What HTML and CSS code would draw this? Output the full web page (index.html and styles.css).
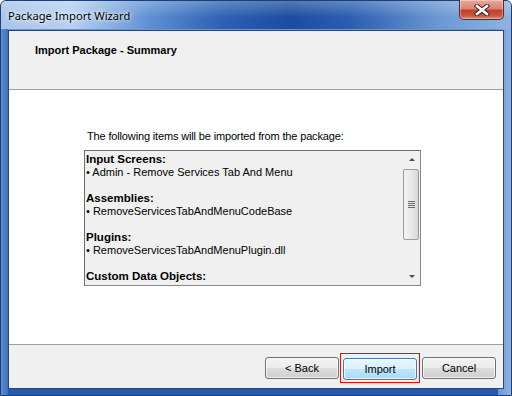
FILE: index.html
```html
<!DOCTYPE html>
<html lang="en">
<head>
    <meta charset="UTF-8">
    <title>Package Import Wizard</title>
    <link rel="stylesheet" href="styles.css">
</head>
<body>
    <div class="window">
        <div class="titlebar">
            <span class="title">Package Import Wizard</span>
            <div class="close-btn">
                <svg width="16" height="12" viewBox="0 0 16 12">
                    <path d="M3 2 L13 10 M13 2 L3 10" stroke="#3a2020" stroke-width="4.5" stroke-linecap="square"/>
                    <path d="M3 2 L13 10 M13 2 L3 10" stroke="#fff" stroke-width="2.6" stroke-linecap="square"/>
                </svg>
            </div>
        </div>

        <div class="client">
            <div class="wizard-header">
                <h1>Import Package - Summary</h1>
            </div>

            <div class="wizard-body">
                <p class="intro">The following items will be imported from the package:</p>
                <div class="listbox">
                    <div class="list-text">
                        <b>Input Screens:</b>
                        <span>&bull; Admin - Remove Services Tab And Menu</span>
                        <span>&nbsp;</span>
                        <b>Assemblies:</b>
                        <span>&bull; RemoveServicesTabAndMenuCodeBase</span>
                        <span>&nbsp;</span>
                        <b>Plugins:</b>
                        <span>&bull; RemoveServicesTabAndMenuPlugin.dll</span>
                        <span>&nbsp;</span>
                        <b>Custom Data Objects:</b>
                    </div>
                    <div class="scrollbar">
                        <div class="arrow up"></div>
                        <div class="track">
                            <div class="thumb"><i></i><i></i><i></i><i></i></div>
                        </div>
                        <div class="arrow down"></div>
                    </div>
                </div>
            </div>

            <div class="wizard-footer">
                <button class="btn">&lt; Back</button>
                <div class="focus-box">
                    <button class="btn btn-default">Import</button>
                </div>
                <button class="btn">Cancel</button>
            </div>
        </div>
    </div>
</body>
</html>
```

FILE: styles.css
```css
* {
    margin: 0;
    padding: 0;
    box-sizing: border-box;
}

body {
    width: 512px;
    height: 396px;
    overflow: hidden;
    background: #fff;
    font-family: "Liberation Sans", Arial, sans-serif;
    font-size: 11px;
    color: #000;
}

/* ventana */
.window {
    width: 512px;
    height: 396px;
    display: flex;
    flex-direction: column;
    padding: 0 7px 6px 7px;
    border: 1px solid #1c3f78;
    border-radius: 6px 6px 0 0;
    background:
        linear-gradient(to right, #5c8dd0 0, #3e70bd 7px, transparent 7px, transparent 497px, #6f98d2 497px, #8fb2df 510px),
        linear-gradient(to bottom, #6f9ad6 0, #2f63b4 60%, #2559ab 100%);
    position: relative;
}

.titlebar {
    height: 28px;
    margin: 0 -7px;
    padding: 0 7px;
    display: flex;
    align-items: center;
    position: relative;
    border-radius: 5px 5px 0 0;
    background:
        linear-gradient(to bottom, rgba(255,255,255,0.25), rgba(255,255,255,0) 60%),
        linear-gradient(to right, #a8c5ea 0, #b7d0ef 70px, #5c8fd2 150px, #2e62b4 220px, #1a4c9f 290px, #2c5fb1 350px, #6d98d4 440px, #90b3e0 510px);
}

.title {
    font-family: "Noto Sans", "DejaVu Sans", sans-serif;
    font-size: 11.2px;
    color: #000;
    margin-top: 1px;
    text-shadow: 0 0 6px rgba(255,255,255,0.9), 0 0 3px rgba(255,255,255,0.9);
}

.close-btn {
    position: absolute;
    top: -1px;
    right: 7px;
    width: 45px;
    height: 20px;
    border: 1px solid #5b2a22;
    border-top: none;
    border-radius: 0 0 5px 5px;
    background: linear-gradient(to bottom, #e9a899 0, #d98474 45%, #c0412b 55%, #c9533e 80%, #dd8a72 100%);
    box-shadow: inset 0 0 0 1px rgba(255,255,255,0.35);
    display: flex;
    align-items: center;
    justify-content: center;
}

/* area cliente */
.client {
    flex: 1;
    display: flex;
    flex-direction: column;
    background: #f0f0f0;
    border: 1px solid #28477c;
    margin-top: 1px;
}

.wizard-header {
    height: 59px;
    border-bottom: 1px solid #a0a0a0;
    padding: 13px 0 0 26px;
}

.wizard-header h1 {
    font-size: 11px;
    font-weight: bold;
}

.wizard-body {
    flex: 1;
    background: #fff;
    border-top: 1px solid #fff;
    border-bottom: 1px solid #a0a0a0;
    padding: 39px 0 0 75px;
}

.intro {
    line-height: 13px;
    margin-left: 3px;
    margin-bottom: 7px;
    letter-spacing: -0.15px;
}

.listbox {
    width: 337px;
    height: 136px;
    display: flex;
    background: #f0f0f0;
    border: 1px solid #828790;
    border-top-color: #6d6d6d;
    border-left-color: #6d6d6d;
    overflow: hidden;
}

.list-text {
    flex: 1;
    padding: 2px 0 0 1px;
    display: flex;
    flex-direction: column;
    line-height: 13px;
}

.list-text b {
    font-weight: bold;
    font-size: 11.5px;
}

.scrollbar {
    width: 17px;
    display: flex;
    flex-direction: column;
    background: #f0f0f0;
}

.arrow {
    height: 17px;
    display: flex;
    align-items: center;
    justify-content: center;
}

.arrow::before {
    content: "";
    border-left: 3px solid transparent;
    border-right: 3px solid transparent;
}

.arrow.up::before {
    border-bottom: 3px solid #4d4d4d;
}

.arrow.down::before {
    border-top: 3px solid #4d4d4d;
}

.track {
    flex: 1;
    padding: 1px 1px 0 0;
}

.thumb {
    height: 71px;
    border: 1px solid #9b9b9b;
    border-radius: 2px;
    background: linear-gradient(to right, #f3f3f3, #e6e6e6 60%, #d6d6d6);
    display: flex;
    flex-direction: column;
    align-items: center;
    justify-content: center;
    gap: 1px;
}

.thumb i {
    display: block;
    width: 7px;
    height: 1px;
    background: #6a6a6a;
}

/* pie */
.wizard-footer {
    height: 43px;
    display: flex;
    align-items: center;
    justify-content: flex-end;
    padding: 2px 7px 0 0;
}

.btn {
    width: 74px;
    height: 22px;
    font-family: "Liberation Sans", Arial, sans-serif;
    font-size: 11px;
    color: #000;
    border: 1px solid #707070;
    border-radius: 3px;
    background: linear-gradient(to bottom, #f2f2f2 0, #ebebeb 50%, #dddddd 50%, #cfcfcf 100%);
    box-shadow: inset 0 0 0 1px rgba(255,255,255,0.7);
}

.btn-default {
    border-color: #3c7fb1;
    background: linear-gradient(to bottom, #eaf6fd 0, #d9f0fc 50%, #bee6fd 50%, #a7d9f5 100%);
}

.focus-box {
    border: 1px solid #ff0000;
    padding: 4px 2px 2px 2px;
    margin: 0 2px 0 1px;
}
```
